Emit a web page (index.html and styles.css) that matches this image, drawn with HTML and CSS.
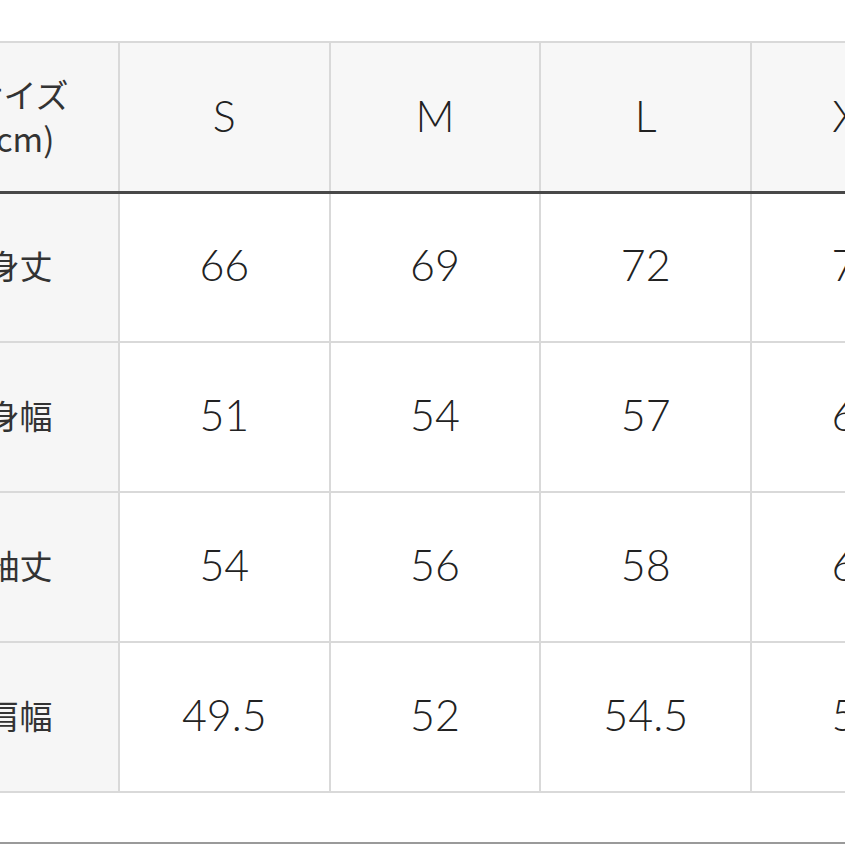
FILE: index.html
```html
<!DOCTYPE html>
<html lang="ja">
<head>
<meta charset="utf-8">
<title>サイズ表</title>
<link rel="stylesheet" href="styles.css">
</head>
<body>
<div class="page">
  <table class="size-table">
    <colgroup>
      <col class="col-label">
      <col class="col-size">
      <col class="col-size">
      <col class="col-size">
      <col class="col-size">
    </colgroup>
    <thead>
      <tr>
        <th class="label">サイズ<br>(cm)</th>
        <th>S</th>
        <th>M</th>
        <th>L</th>
        <th>XL</th>
      </tr>
    </thead>
    <tbody>
      <tr><th class="label">身丈</th><td>66</td><td>69</td><td>72</td><td>75</td></tr>
      <tr><th class="label">身幅</th><td>51</td><td>54</td><td>57</td><td>60</td></tr>
      <tr><th class="label">袖丈</th><td>54</td><td>56</td><td>58</td><td>60</td></tr>
      <tr><th class="label">肩幅</th><td>49.5</td><td>52</td><td>54.5</td><td>57</td></tr>
    </tbody>
  </table>
  <div class="rule"></div>
</div>
</body>
</html>
```
FILE: styles.css
```css
html, body {
  margin: 0;
  padding: 0;
  background: #ffffff;
  overflow: hidden;
}

.page {
  width: 845px;
  height: 845px;
  overflow: hidden;
  padding-top: 41px;
  box-sizing: border-box;
  display: flex;
  flex-direction: column;
}

.size-table {
  margin-left: -81px;
  flex: none;
  border-collapse: collapse;
  table-layout: fixed;
  width: 1042px;
  font-family: Lato, "Noto Sans", "Noto Sans CJK JP", sans-serif;
  color: #222222;
}

.col-label { width: 199px; }
.col-size { width: 210.7px; }

.size-table th,
.size-table td {
  border: 2px solid #d9d9d9;
  padding: 0 0 5px;
  text-align: center;
  vertical-align: middle;
  font-weight: 300;
  font-size: 43px;
  height: 146px;
  box-sizing: border-box;
}

.size-table thead th {
  background: #f7f7f7;
  border-bottom: 3px solid #484848;
  height: 150px;
  padding-bottom: 2px;
}

.size-table td {
  background: #ffffff;
}

.size-table tbody tr {
  height: 150px;
}

.size-table .label {
  background: #f6f6f6;
  font-family: "Noto Sans CJK JP", sans-serif;
  font-weight: 400;
  font-size: 33px;
  line-height: 44px;
  color: #333333;
}

.rule {
  margin-top: auto;
  height: 2px;
  background: #9a9a9a;
  margin-bottom: 1px;
}
```
